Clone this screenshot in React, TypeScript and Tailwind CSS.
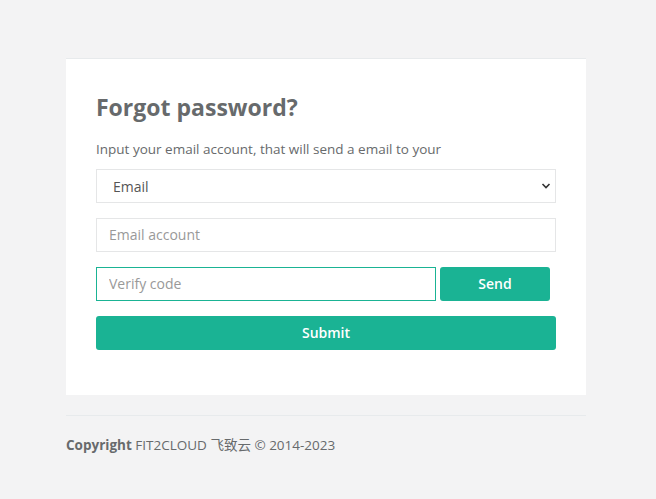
export default function App() {
  return (
    <div
      className="min-h-screen bg-[#f3f3f4] pt-[58px] text-[#676a6c]"
      style={{ fontFamily: '"Open Sans", "Noto Sans CJK SC", sans-serif' }}
    >
      <div className="ml-[66px] w-[520px]">
        <div className="border-t border-[#e7eaec] bg-white px-[30px] pb-[45px] pt-[30px]">
          <h2 className="text-[23px] font-bold leading-[36px] text-[#676a6c]">Forgot password?</h2>
          <p className="mt-[14px] text-[13.5px] leading-[20px]">
            Input your email account, that will send a email to your
          </p>

          <div className="mt-[10px] flex flex-col gap-[15px]">
            <div className="relative">
              <select className="h-[34px] w-full appearance-none border border-[#e5e6e7] bg-white px-[16px] text-[14px] text-[#555] outline-none">
                <option>Email</option>
              </select>
              <svg
                className="pointer-events-none absolute right-[5px] top-[13px]"
                width="10"
                height="8"
                viewBox="0 0 10 8"
              >
                <path d="M1.5 2l3.5 3.5L8.5 2" fill="none" stroke="#333" strokeWidth="1.6" />
              </svg>
            </div>

            <input
              className="h-[34px] w-full border border-[#e5e6e7] px-[12px] pb-[1px] text-[14px] outline-none placeholder:text-[#999]"
              placeholder="Email account"
            />

            <div className="flex gap-[4px]">
              <input
                className="h-[34px] w-[340px] border border-[#1ab394] px-[12px] pb-[1px] text-[14px] outline-none placeholder:text-[#999]"
                placeholder="Verify code"
              />
              <button className="h-[34px] w-[110px] rounded-[3px] bg-[#1ab394] pb-[1px] text-[14px] font-semibold text-white">
                Send
              </button>
            </div>

            <button className="h-[34px] w-full rounded-[3px] bg-[#1ab394] pb-[1px] text-[14px] font-semibold text-white">
              Submit
            </button>
          </div>
        </div>

        <hr className="mt-[20px] border-t border-[#e7eaec]" />
        <p className="mt-[19px] text-[13.5px]">
          <strong>Copyright</strong> FIT2CLOUD 飞致云 © 2014-2023
        </p>
      </div>
    </div>
  );
}
